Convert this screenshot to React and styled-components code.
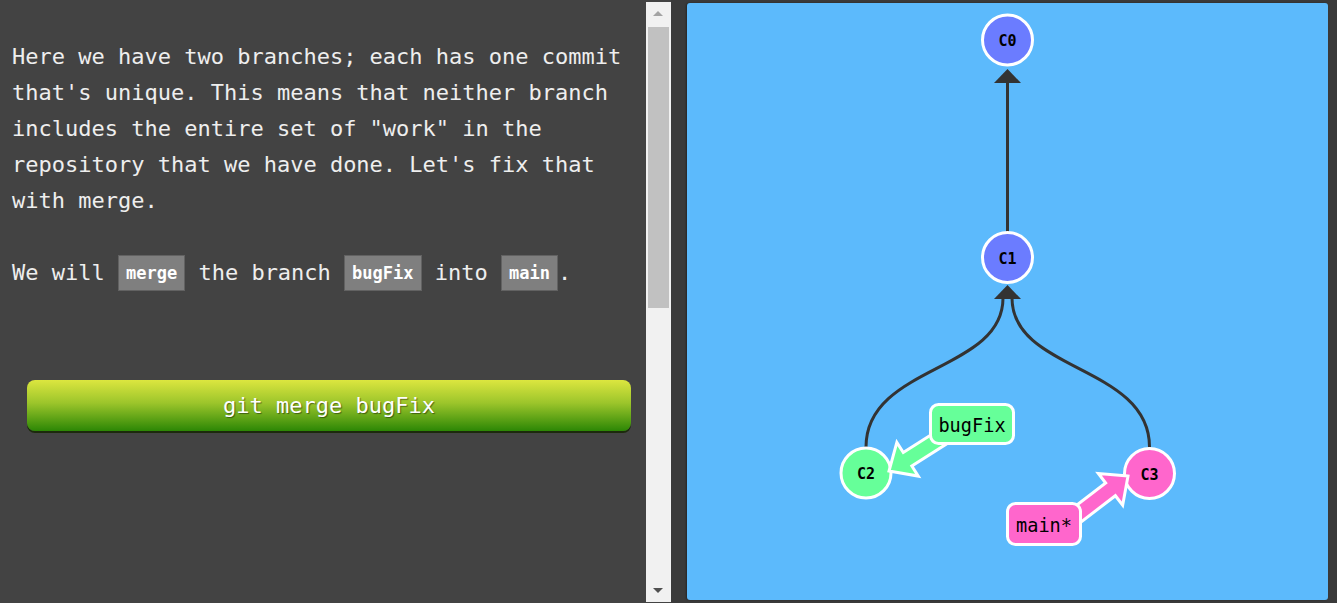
import styled, { createGlobalStyle } from 'styled-components';

const GlobalStyle = createGlobalStyle`
  html, body {
    margin: 0;
    padding: 0;
    height: 100%;
    overflow: hidden;
    background: #3a3a3a;
  }
  #root {
    height: 100%;
  }
`;

const Page = styled.div`
  display: flex;
  width: 100%;
  height: 603px;
  font-family: "DejaVu Sans Mono", "Liberation Mono", monospace;
`;

const LeftPane = styled.div`
  display: flex;
  width: 671px;
  flex-shrink: 0;
  background: #434343;
`;

const Content = styled.div`
  flex: 1;
  padding: 39px 0 0 12px;
`;

const Paragraph = styled.p`
  margin: 0 0 36px;
  width: 625px;
  font-size: 22px;
  line-height: 36px;
  color: #eeeeee;
`;

const Code = styled.code`
  display: inline-block;
  vertical-align: top;
  height: 34px;
  line-height: 34px;
  padding: 0 7px;
  border: 1px solid #626262;
  background: #7f7f7f;
  color: #ffffff;
  font-family: "DejaVu Sans Mono", "Liberation Mono", monospace;
  font-size: 17px;
  font-weight: bold;
`;

const CommandButton = styled.button`
  display: block;
  margin: 89px 0 0 15px;
  width: 604px;
  height: 51px;
  border: none;
  border-radius: 8px;
  background: linear-gradient(#dce63f 0%, #9cc52b 45%, #2c8705 100%);
  box-shadow: 0 2px 0 #1c2a0c;
  color: #ffffff;
  font-family: "DejaVu Sans Mono", "Liberation Mono", monospace;
  font-size: 22px;
  text-shadow: 1px 1px 1px rgba(0, 0, 0, 0.45);
  cursor: pointer;
`;

const Scrollbar = styled.div`
  position: relative;
  width: 25px;
  margin: 2px 0 1px;
  background: #f1f1f1;
`;

const Thumb = styled.div`
  margin: 25px 2px 0;
  height: 281px;
  background: #c1c1c1;
`;

const ScrollArrow = styled.div`
  position: absolute;
  left: 7px;
  width: 0;
  height: 0;
  border-left: 5.5px solid transparent;
  border-right: 5.5px solid transparent;
  ${(p) =>
    p.$up
      ? `top: 9px; border-bottom: 5px solid #a3a3a3;`
      : `bottom: 9px; border-top: 5px solid #505050;`}
`;

const RightPane = styled.div`
  flex: 1;
  padding: 3px 9px 3px 16px;
  background: #3a3a3a;
`;

const Canvas = styled.div`
  width: 100%;
  height: 100%;
  border-radius: 3px;
  background: #5cbafc;
  box-shadow: -1px 0 2px rgba(0, 0, 0, 0.35);
  overflow: hidden;
`;

const Graph = styled.svg`
  display: block;
  width: 100%;
  height: 100%;
`;

const nodes = [
  { id: 'C0', x: 1007.5, y: 40, fill: '#6b7cff' },
  { id: 'C1', x: 1007.5, y: 257.5, fill: '#6b7cff' },
  { id: 'C2', x: 866, y: 473, fill: '#66ff99' },
  { id: 'C3', x: 1149.5, y: 473.5, fill: '#ff66cc' },
];

const branches = [
  {
    name: 'bugFix',
    fill: '#66ff99',
    rect: { x: 930.5, y: 404.5, w: 83, h: 39 },
    tip: { x: 889, y: 471 },
    tail: { x: 952, y: 431 },
  },
  {
    name: 'main*',
    fill: '#ff66cc',
    rect: { x: 1007.5, y: 503.5, w: 73, h: 41 },
    tip: { x: 1128, y: 476 },
    tail: { x: 1060, y: 528 },
  },
];

function arrowPoints(tip, tail, headLen = 22, headHalf = 20, shaftHalf = 8) {
  const dx = tail.x - tip.x;
  const dy = tail.y - tip.y;
  const len = Math.hypot(dx, dy);
  const ux = dx / len;
  const uy = dy / len;
  const px = -uy;
  const py = ux;
  const bx = tip.x + ux * headLen;
  const by = tip.y + uy * headLen;
  const pts = [
    [tip.x, tip.y],
    [bx + px * headHalf, by + py * headHalf],
    [bx + px * shaftHalf, by + py * shaftHalf],
    [tail.x + px * shaftHalf, tail.y + py * shaftHalf],
    [tail.x - px * shaftHalf, tail.y - py * shaftHalf],
    [bx - px * shaftHalf, by - py * shaftHalf],
    [bx - px * headHalf, by - py * headHalf],
  ];
  return pts.map((p) => p.join(',')).join(' ');
}

const headPoints = (x, tipY, baseY, half) =>
  `${x},${tipY} ${x + half},${baseY} ${x - half},${baseY}`;

const CommitGraph = () => (
  <Graph viewBox="687 3 641 597">
    <g stroke="#333" strokeWidth="3" fill="none">
      <line x1="1007.5" y1="82" x2="1007.5" y2="232" />
      <path d="M866,447 C866,365 1003,372 1003,298" />
      <path d="M1149.5,447 C1149.5,365 1012,372 1012,298" />
    </g>
    <g fill="#333">
      <polygon points={headPoints(1007.5, 69, 83, 13.5)} />
      <polygon points={headPoints(1007.5, 285, 299, 13.5)} />
    </g>
    {nodes.map((n) => (
      <g key={n.id}>
        <circle cx={n.x} cy={n.y} r="25" fill={n.fill} stroke="#fff" strokeWidth="3" />
        <text
          x={n.x}
          y={n.y + 1}
          textAnchor="middle"
          dominantBaseline="central"
          fontFamily="DejaVu Sans Mono, monospace"
          fontWeight="bold"
          fontSize="15"
          fill="#000"
        >
          {n.id}
        </text>
      </g>
    ))}
    {branches.map((b) => (
      <g key={b.name}>
        <polygon
          points={arrowPoints(b.tip, b.tail)}
          fill={b.fill}
          stroke="#fff"
          strokeWidth="3"
          strokeLinejoin="miter"
        />
        <rect
          x={b.rect.x}
          y={b.rect.y}
          width={b.rect.w}
          height={b.rect.h}
          rx="8"
          fill={b.fill}
          stroke="#fff"
          strokeWidth="3"
        />
        <text
          x={b.rect.x + b.rect.w / 2}
          y={b.rect.y + b.rect.h / 2 + 1}
          textAnchor="middle"
          dominantBaseline="central"
          fontFamily="DejaVu Sans Mono, monospace"
          fontSize="18.6"
          fill="#000"
        >
          {b.name}
        </text>
      </g>
    ))}
  </Graph>
);

const App = () => {
  return (
    <>
      <GlobalStyle />
      <Page>
        <LeftPane>
          <Content>
            <Paragraph>
              Here we have two branches; each has one commit that's unique. This means that
              neither branch includes the entire set of "work" in the repository that we have
              done. Let's fix that with merge.
            </Paragraph>
            <Paragraph>
              We will <Code>merge</Code> the branch <Code>bugFix</Code> into <Code>main</Code>.
            </Paragraph>
            <CommandButton>git merge bugFix</CommandButton>
          </Content>
          <Scrollbar>
            <ScrollArrow $up />
            <Thumb />
            <ScrollArrow />
          </Scrollbar>
        </LeftPane>
        <RightPane>
          <Canvas>
            <CommitGraph />
          </Canvas>
        </RightPane>
      </Page>
    </>
  );
};

export default App;
